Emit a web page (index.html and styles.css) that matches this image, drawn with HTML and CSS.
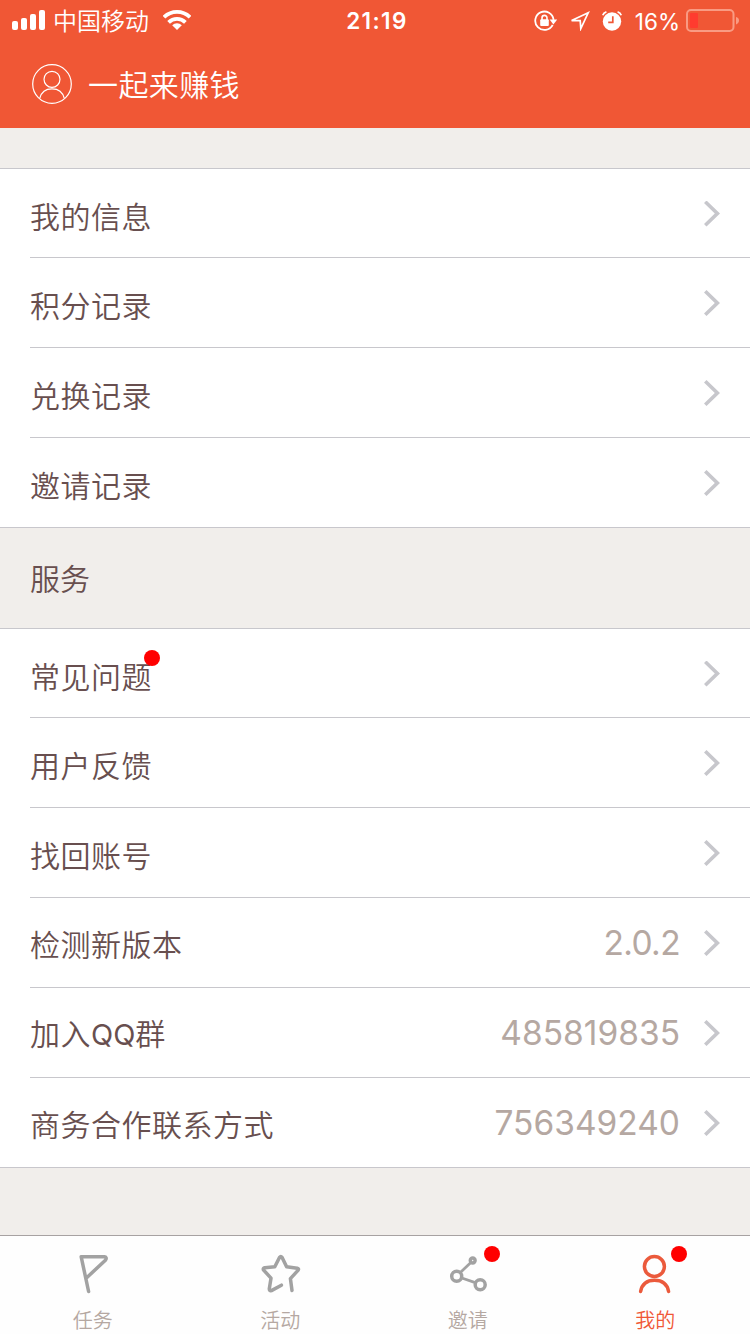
FILE: index.html
```html
<!DOCTYPE html>
<html lang="zh-CN">
<head>
    <meta charset="UTF-8">
    <meta name="viewport" content="width=device-width, initial-scale=1.0">
    <title>我的</title>
    <link rel="stylesheet" href="styles.css">
</head>
<body>
    <header>
        <div class="status-bar">
            <div class="status-left">
                <svg class="signal" width="34" height="22" viewBox="0 0 34 22" fill="#fff">
                    <rect x="0" y="11" width="6" height="9" rx="2"/>
                    <rect x="9" y="8" width="6" height="12" rx="2"/>
                    <rect x="18" y="4" width="6" height="16" rx="2"/>
                    <rect x="27" y="0" width="6" height="20" rx="2"/>
                </svg>
                <span class="carrier">中国移动</span>
                <svg class="wifi" width="28" height="20" viewBox="0 0 28 20" fill="none" stroke="#fff" stroke-width="3.8">
                    <path d="M1 7.2a18.6 18.6 0 0 1 26 0"/>
                    <path d="M5.6 12.4a12 12 0 0 1 16.8 0"/>
                    <path d="M14 20l-4.8-4.8a6.8 6.8 0 0 1 9.6 0z" fill="#fff" stroke="none"/>
                </svg>
            </div>
            <div class="clock">21:19</div>
            <div class="status-right">
                <svg width="24" height="22" viewBox="0 0 24 22" fill="none" stroke="#fff" stroke-width="1.8">
                    <path d="M18.7 14.8A9.2 9.2 0 1 1 19.6 9.8"/>
                    <path d="M15.6 9.6h7.6l-3.8 4.8z" fill="#fff" stroke="none"/>
                    <rect x="6.2" y="9.3" width="8.6" height="6.8" rx="1" fill="#fff" stroke="none"/>
                    <path d="M8 10V7.9a2.5 2.5 0 0 1 5 0v2.1" stroke-width="1.6"/>
                </svg>
                <svg class="location" width="20" height="20" viewBox="0 0 20 20" fill="none" stroke="#fff" stroke-width="1.7">
                    <path d="M1.6 9.600L18.200 1.800 10.800 17.600 10.200 9.600z"/>
                </svg>
                <svg class="alarm" width="22" height="22" viewBox="0 0 22 22">
                    <circle cx="11" cy="11.5" r="9.2" fill="#fff"/>
                    <path d="M1.8 5.2Q2.6 2.6 5.4 1.8M20.2 5.2Q19.4 2.6 16.6 1.8" fill="none" stroke="#fff" stroke-width="1.8"/>
                    <path d="M11.8 6.2v6.2H7.2" fill="none" stroke="#f05735" stroke-width="1.7"/>
                </svg>
                <span class="percent">16%</span>
                <svg class="battery" width="54" height="24" viewBox="0 0 54 24">
                    <rect x="1" y="1" width="46.5" height="21" rx="4" fill="none" stroke="#f99b83" stroke-width="2"/>
                    <rect x="4" y="4" width="8" height="15" rx="1" fill="#ff3b2f"/>
                    <path d="M50 8q3 .8 3 3.6t-3 3.8z" fill="#f99b83"/>
                </svg>
            </div>
        </div>
        <div class="title-bar">
            <svg class="avatar" width="40" height="40" viewBox="0 0 40 40" fill="none" stroke="#fff" stroke-width="1.2">
                <circle cx="20" cy="20" r="19.3"/>
                <circle cx="20" cy="15.3" r="8"/>
                <path d="M7.8 34.2C9.4 27.6 14 24.8 20 24.8s10.6 2.8 12.2 9.4"/>
            </svg>
            <h1>一起来赚钱</h1>
        </div>
    </header>

    <main>
        <ul class="list">
            <li><span class="label">我的信息</span><i class="arrow"></i></li>
            <li><span class="label">积分记录</span><i class="arrow"></i></li>
            <li><span class="label">兑换记录</span><i class="arrow"></i></li>
            <li><span class="label">邀请记录</span><i class="arrow"></i></li>
        </ul>
        <h2>服务</h2>
        <ul class="list">
            <li><span class="label">常见问题<b class="dot"></b></span><i class="arrow"></i></li>
            <li><span class="label">用户反馈</span><i class="arrow"></i></li>
            <li><span class="label">找回账号</span><i class="arrow"></i></li>
            <li class="detail"><span class="label">检测新版本</span><span class="value version">2.0.2</span><i class="arrow"></i></li>
            <li class="detail"><span class="label">加入<span class="latin">QQ</span>群</span><span class="value">485819835</span><i class="arrow"></i></li>
            <li class="detail"><span class="label">商务合作联系方式</span><span class="value">756349240</span><i class="arrow"></i></li>
        </ul>
    </main>

    <nav class="tab-bar">
        <a class="tab">
            <svg width="44" height="44" viewBox="0 0 44 44">
                <path d="M17.6 40.500L10.200 5.800H33.500Q36.400 6.400 34.400 9.200L16.200 26.200"/>
            </svg>
            <span>任务</span>
        </a>
        <a class="tab">
            <svg width="44" height="44" viewBox="0 0 44 44">
                <path d="M23.400 34.200L13.400 39.600Q11.200 40.200 11.300 37.800L13 27.200 5.400 18.800Q4.800 17.200 6.800 16.700L16.800 15.800 21.600 6.200Q22.800 4.600 24 6.200L28.600 15.800 39.200 17.200Q41.400 17.800 40 19.400L32.400 27.600 34 39.400"/>
            </svg>
            <span>活动</span>
        </a>
        <a class="tab">
            <svg width="44" height="44" viewBox="0 0 44 44">
                <circle cx="10.7" cy="25.200" r="5"/>
                <circle cx="26.7" cy="9.500" r="2.4"/>
                <circle cx="34.2" cy="33.800" r="5"/>
                <path d="M14.6 21.200L24.600 11.700M15.800 27L29.200 31.600" stroke-width="2.8"/>
            </svg>
            <b class="dot"></b>
            <span>邀请</span>
        </a>
        <a class="tab active">
            <svg width="44" height="44" viewBox="0 0 44 44">
                <circle cx="21.4" cy="15.500" r="10"/>
                <path d="M7.6 40.500C9 33.300 14 29.300 21.500 29.300S34.200 33.300 35.600 40.500"/>
            </svg>
            <b class="dot"></b>
            <span>我的</span>
        </a>
    </nav>
</body>
</html>
```

FILE: styles.css
```css
* {
    box-sizing: border-box;
}

body {
    margin: 0;
    height: 1334px;
    display: flex;
    flex-direction: column;
    background-color: #f1eeeb;
    color: #684f4f;
    font-family: Inter, "Noto Sans CJK SC", sans-serif;
    font-weight: 350;
    overflow: hidden;
}

header {
    height: 128px;
    background-color: #f05735;
    color: #fff;
}

.status-bar {
    height: 40px;
    display: grid;
    grid-template-columns: 1fr auto 1fr;
    align-items: center;
    padding: 0 8px 0 12px;
    line-height: 40px;
}

.status-left,
.status-right {
    display: flex;
    align-items: center;
}

.status-right {
    justify-content: flex-end;
    padding-right: 2px;
}

.carrier {
    margin: 2px 0 0 7px;
    font-size: 24px;
}

.wifi {
    margin: 0 0 2px 14px;
}

.clock {
    font-weight: 600;
    font-size: 22.5px;
    letter-spacing: 1.4px;
}

.location {
    margin-left: 12px;
}

.alarm {
    margin-left: 11px;
}

.percent {
    margin: 1px 6px 0 12px;
    font-weight: 400;
    font-size: 22.5px;
}

.title-bar {
    height: 88px;
    display: flex;
    align-items: center;
    padding-left: 32px;
}

.title-bar h1 {
    margin: 0 0 2px 16px;
    font-size: 30px;
    font-weight: 350;
    letter-spacing: 0.4px;
}

main {
    flex: 1;
    padding-top: 40px;
}

.list {
    margin: 0;
    padding: 0;
    list-style: none;
    background-color: #fff;
    border-bottom: 1px solid #c8c7cc;
}

.list li {
    height: 90px;
    display: flex;
    align-items: center;
    margin-left: 30px;
    padding: 1px 30px 0 0;
    border-bottom: 1px solid #c8c7cc;
}

/* full-width line above and below each group */
.list li:first-child {
    margin-left: 0;
    padding: 0 30px;
    border-top: 1px solid #c8c7cc;
    border-bottom: none;
}

.list li:nth-child(2) {
    position: relative;
}

.list li:nth-child(2)::before {
    content: "";
    position: absolute;
    top: -1px;
    left: 0;
    right: 0;
    height: 1px;
    background-color: #c8c7cc;
}

.list li:last-child {
    height: 89px;
    border-bottom: none;
}

.label {
    position: relative;
    flex: 1;
    padding-top: 6px;
    font-size: 30px;
    line-height: 44px;
    letter-spacing: 0.5px;
}

.detail .label {
    padding-top: 3px;
}

.latin {
    font-weight: 400;
    font-size: 29px;
    letter-spacing: 0;
}

.value {
    margin-right: 24px;
    color: #b5a8a2;
    font-weight: 400;
    font-size: 33.5px;
    line-height: 44px;
}

.version {
    letter-spacing: -0.6px;
}

.arrow {
    width: 16px;
    height: 26px;
    background-color: #c7c7cc;
    clip-path: polygon(0 2.5px, 2.5px 0, 16px 13px, 2.5px 26px, 0 23.5px, 10.8px 13px);
}

.dot {
    position: absolute;
    width: 16px;
    height: 16px;
    border-radius: 50%;
    background-color: #f00;
}

.label .dot {
    top: 1px;
    left: 114px;
}

h2 {
    height: 100px;
    margin: 0;
    padding: 1px 30px 0;
    font-size: 30px;
    font-weight: 350;
    line-height: 100px;
}

.tab-bar {
    height: 99px;
    display: grid;
    grid-template-columns: repeat(4, 1fr);
    background-color: #fefefe;
    border-top: 1px solid #a7a2a2;
}

.tab {
    position: relative;
    display: flex;
    flex-direction: column;
    align-items: center;
    padding: 15px 2px 0 0;
    color: #b5a8a2;
    font-size: 20px;
    line-height: 28px;
}

.tab svg {
    fill: none;
    stroke: #a2a2a2;
    stroke-width: 3.5;
    stroke-linecap: round;
    stroke-linejoin: round;
}

.tab span {
    margin-top: 12px;
}

.tab .dot {
    top: 10px;
    left: 109px;
}

.tab.active {
    color: #f05735;
}

.tab.active .dot {
    left: 108px;
}

.tab.active svg {
    stroke: #eb5a3c;
}
```
